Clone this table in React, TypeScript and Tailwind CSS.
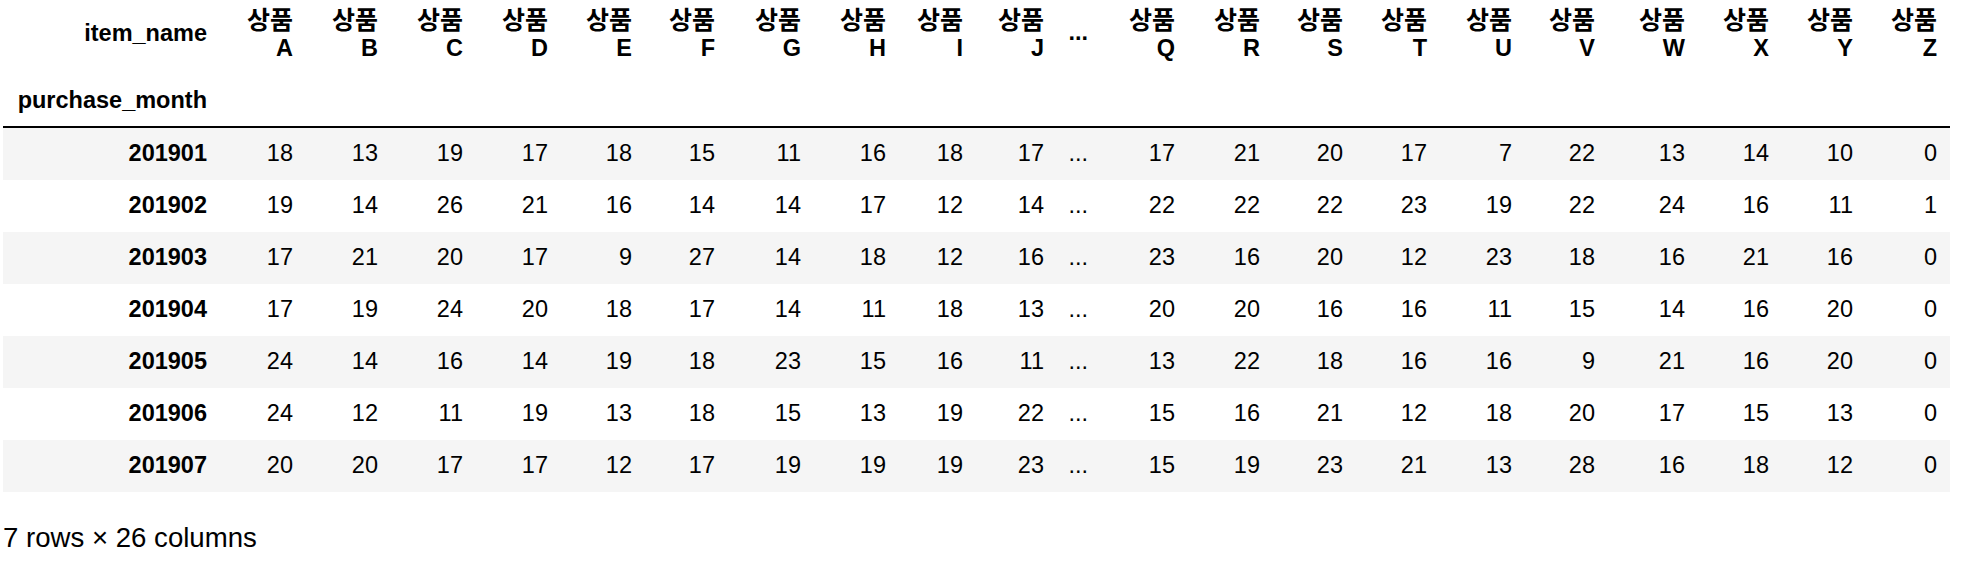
import React from 'react';

const leftCols = ['A', 'B', 'C', 'D', 'E', 'F', 'G', 'H', 'I', 'J'];
const rightCols = ['Q', 'R', 'S', 'T', 'U', 'V', 'W', 'X', 'Y', 'Z'];

const leftWidths = ['w-[86px]', 'w-[85px]', 'w-[85px]', 'w-[85px]', 'w-[84px]', 'w-[83px]', 'w-[86px]', 'w-[85px]', 'w-[77px]', 'w-[81px]'];
const rightWidths = ['w-[87px]', 'w-[85px]', 'w-[83px]', 'w-[84px]', 'w-[85px]', 'w-[83px]', 'w-[90px]', 'w-[84px]', 'w-[84px]', 'w-[84px]'];

const rows: { month: string; left: number[]; right: number[] }[] = [
  { month: '201901', left: [18, 13, 19, 17, 18, 15, 11, 16, 18, 17], right: [17, 21, 20, 17, 7, 22, 13, 14, 10, 0] },
  { month: '201902', left: [19, 14, 26, 21, 16, 14, 14, 17, 12, 14], right: [22, 22, 22, 23, 19, 22, 24, 16, 11, 1] },
  { month: '201903', left: [17, 21, 20, 17, 9, 27, 14, 18, 12, 16], right: [23, 16, 20, 12, 23, 18, 16, 21, 16, 0] },
  { month: '201904', left: [17, 19, 24, 20, 18, 17, 14, 11, 18, 13], right: [20, 20, 16, 16, 11, 15, 14, 16, 20, 0] },
  { month: '201905', left: [24, 14, 16, 14, 19, 18, 23, 15, 16, 11], right: [13, 22, 18, 16, 16, 9, 21, 16, 20, 0] },
  { month: '201906', left: [24, 12, 11, 19, 13, 18, 15, 13, 19, 22], right: [15, 16, 21, 12, 18, 20, 17, 15, 13, 0] },
  { month: '201907', left: [20, 20, 17, 17, 12, 17, 19, 19, 19, 23], right: [15, 19, 23, 21, 13, 28, 16, 18, 12, 0] },
];

const ItemHeader: React.FC<{ letter: string }> = ({ letter }) => (
  <th className="align-top pt-[6px] pr-[13px] pl-0 text-right font-bold leading-[28px]">
    <div className="h-[28px] whitespace-nowrap text-[25px]">상품</div>
    <div className="h-[28px]">{letter}</div>
  </th>
);

const App: React.FC = () => {
  return (
    <div className="min-h-screen w-full bg-white pl-[3px] text-black font-['Liberation_Sans','Noto_Sans_CJK_KR',sans-serif] text-[23.5px]">
      <table className="table-fixed w-[1947px] border-separate border-spacing-0">
        <colgroup>
          <col className="w-[217px]" />
          {leftWidths.map((w, i) => <col key={'l' + i} className={w} />)}
          <col className="w-[44px]" />
          {rightWidths.map((w, i) => <col key={'r' + i} className={w} />)}
        </colgroup>
        <thead>
          <tr className="h-[74px]">
            <th className="align-top pt-[19px] pr-[13px] text-right font-bold leading-[28px]">item_name</th>
            {leftCols.map(c => <ItemHeader key={c} letter={c} />)}
            <th className="align-top pt-[18px] pr-[13px] pl-0 text-right font-bold leading-[28px]">...</th>
            {rightCols.map(c => <ItemHeader key={c} letter={c} />)}
          </tr>
          <tr className="h-[54px]">
            <th className="align-top pt-[12px] pr-[13px] text-right font-bold leading-[28px] border-b-2 border-black whitespace-nowrap">purchase_month</th>
            {Array.from({ length: 21 }).map((_, i) => (
              <th key={i} className="border-b-2 border-black"></th>
            ))}
          </tr>
        </thead>
        <tbody>
          {rows.map((row, ri) => (
            <tr key={row.month} className={`h-[52px] ${ri % 2 === 0 ? 'bg-[#f5f5f5]' : 'bg-white'}`}>
              <th className="align-middle pr-[13px] text-right font-bold">{row.month}</th>
              {row.left.map((v, i) => (
                <td key={'l' + i} className="align-middle pr-[13px] text-right">{v}</td>
              ))}
              <td className="align-middle pr-[13px] text-right">...</td>
              {row.right.map((v, i) => (
                <td key={'r' + i} className="align-middle pr-[13px] text-right">{v}</td>
              ))}
            </tr>
          ))}
        </tbody>
      </table>
      <p className="mt-[30px] text-[27.6px] leading-[32px]">7 rows × 26 columns</p>
    </div>
  );
};

export default App;
